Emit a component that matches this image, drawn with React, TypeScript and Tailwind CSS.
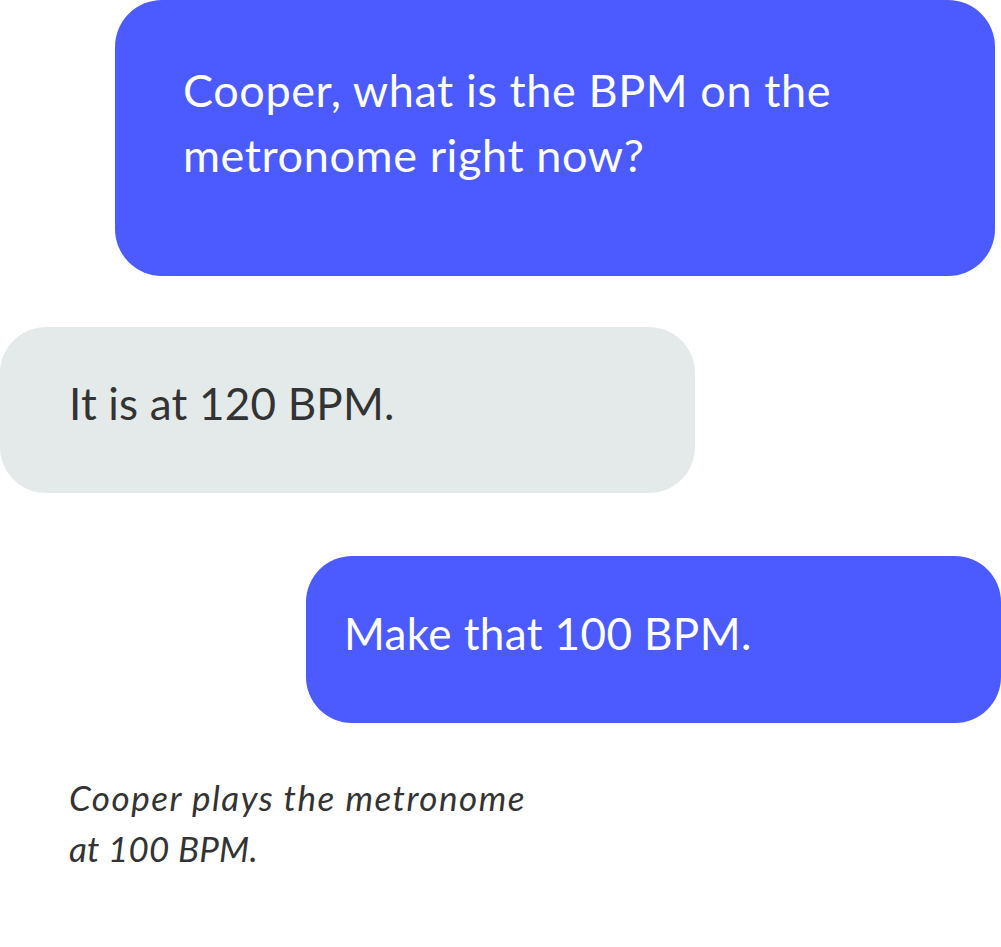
import React from 'react';

const font = { fontFamily: 'Lato, "Open Sans", sans-serif' };

export default function App() {
  return (
    <div className="w-[1001px] h-[947px] bg-white flex flex-col" style={font}>
      {/* question */}
      <div className="ml-[115px] w-[880px] h-[276px] shrink-0 rounded-[47px] bg-[#4b5bff] pl-[68px] pt-[58px]">
        <p className="text-white text-[45px] leading-[65px] tracking-[0.6px]">
          Cooper, what is the BPM on the
          <br />
          metronome right now?
        </p>
      </div>

      {/* reply */}
      <div className="mt-[51px] w-[695px] h-[166px] shrink-0 rounded-[46px] bg-[#e4eaea] pl-[69px] pt-[44px]">
        <p className="text-[#333333] text-[44px] leading-[65px] tracking-[0.2px]">It is at 120 BPM.</p>
      </div>

      {/* follow-up */}
      <div className="mt-[63px] ml-[306px] w-[695px] h-[167px] shrink-0 rounded-[46px] bg-[#4b5bff] pl-[38px] pt-[45px]">
        <p className="text-white text-[44px] leading-[65px] tracking-[0.4px]">Make that 100 BPM.</p>
      </div>

      {/* result */}
      <p className="mt-[49px] ml-[69px] text-[#333333] italic text-[35px] leading-[51px]">
        <span className="tracking-[1.5px]">Cooper plays the metronome</span>
        <br />
        <span className="tracking-[0.2px]">at 100 BPM.</span>
      </p>
    </div>
  );
}
